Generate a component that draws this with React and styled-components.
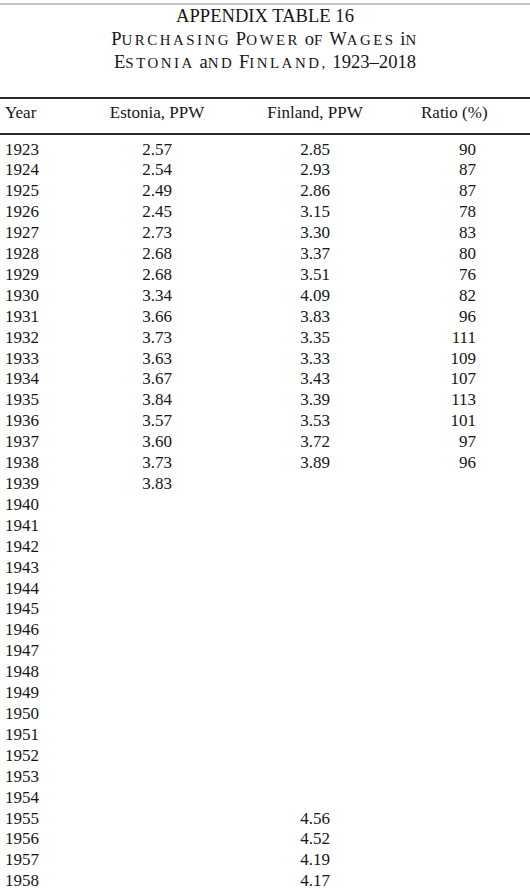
import React from "react"
import styled, {createGlobalStyle} from "styled-components"

const GlobalStyle = createGlobalStyle`
  body {
    margin: 0;
    background: #fff;
    color: #161616;
    font-family: "Liberation Serif", "Times New Roman", serif;
  }
`

const rows = [
  ["1923", "2.57", "2.85", "90"],
  ["1924", "2.54", "2.93", "87"],
  ["1925", "2.49", "2.86", "87"],
  ["1926", "2.45", "3.15", "78"],
  ["1927", "2.73", "3.30", "83"],
  ["1928", "2.68", "3.37", "80"],
  ["1929", "2.68", "3.51", "76"],
  ["1930", "3.34", "4.09", "82"],
  ["1931", "3.66", "3.83", "96"],
  ["1932", "3.73", "3.35", "111"],
  ["1933", "3.63", "3.33", "109"],
  ["1934", "3.67", "3.43", "107"],
  ["1935", "3.84", "3.39", "113"],
  ["1936", "3.57", "3.53", "101"],
  ["1937", "3.60", "3.72", "97"],
  ["1938", "3.73", "3.89", "96"],
  ["1939", "3.83", "", ""],
  ["1940", "", "", ""],
  ["1941", "", "", ""],
  ["1942", "", "", ""],
  ["1943", "", "", ""],
  ["1944", "", "", ""],
  ["1945", "", "", ""],
  ["1946", "", "", ""],
  ["1947", "", "", ""],
  ["1948", "", "", ""],
  ["1949", "", "", ""],
  ["1950", "", "", ""],
  ["1951", "", "", ""],
  ["1952", "", "", ""],
  ["1953", "", "", ""],
  ["1954", "", "", ""],
  ["1955", "", "4.56", ""],
  ["1956", "", "4.52", ""],
  ["1957", "", "4.19", ""],
  ["1958", "", "4.17", ""],
]

// book-style small caps: first letter full size, the rest reduced and tracked
function SmallCaps({text}){
  const words = text.split(" ")
  return words.map((w, i) => {
    const isWord = /^[A-Za-z]/.test(w)
    return <React.Fragment key={i}>
      {i > 0 ? " " : ""}
      {isWord ? <>{w[0]}<Small>{w.slice(1)}</Small></> : w}
    </React.Fragment>
  })
}

function App(){
  return(
  <Page>
    <GlobalStyle />
    <TopRule />
    <Title>
      <TitleLine>APPENDIX TABLE 16</TitleLine>
      <TitleLine><SmallCaps text="Purchasing Power of Wages in" /></TitleLine>
      <TitleLine><SmallCaps text="Estonia and Finland, 1923–2018" /></TitleLine>
    </Title>
    <Rule />
    <HeadRow>
      <Cell>Year</Cell>
      <Cell align="center">Estonia, PPW</Cell>
      <Cell align="center">Finland, PPW</Cell>
      <Cell>Ratio (%)</Cell>
    </HeadRow>
    <Rule />
    <Body>
      {rows.map((r) => {
        return <Row key={r[0]}>
          <Cell>{r[0]}</Cell>
          <Cell align="center">{r[1]}</Cell>
          <Cell align="center">{r[2]}</Cell>
          <Cell align="right">{r[3]}</Cell>
        </Row>
      })}
    </Body>
  </Page>
  )
}

const Page = styled.div`
  width: 530px;
  overflow: hidden;
`

const TopRule = styled.div`
  height: 2px;
  margin-top: 3px;
  background: #c4c4c4;
`

const Title = styled.div`
  text-align: center;
  margin-bottom: 22px;
`

const TitleLine = styled.div`
  font-size: 18.6px;
  line-height: 22.5px;
  white-space: nowrap;
`

const Small = styled.span`
  font-size: 0.8em;
  text-transform: uppercase;
  letter-spacing: 0.17em;
`

const Rule = styled.div`
  height: 2px;
  background: #2a2a2a;
`

const columns = `
  display: grid;
  grid-template-columns: 100px 104px 212px 55px;
  padding-left: 5px;
  font-size: 17px;
`

const HeadRow = styled.div`
  ${columns}
  box-sizing: border-box;
  height: 34px;
  padding-top: 4px;
  line-height: 20px;
  white-space: nowrap;
`

const Body = styled.div`
  padding-top: 5px;
`

const Row = styled.div`
  ${columns}
  line-height: 20.9px;
`

const Cell = styled.div`
  text-align: ${p => p.align || "left"};
`

export default App
